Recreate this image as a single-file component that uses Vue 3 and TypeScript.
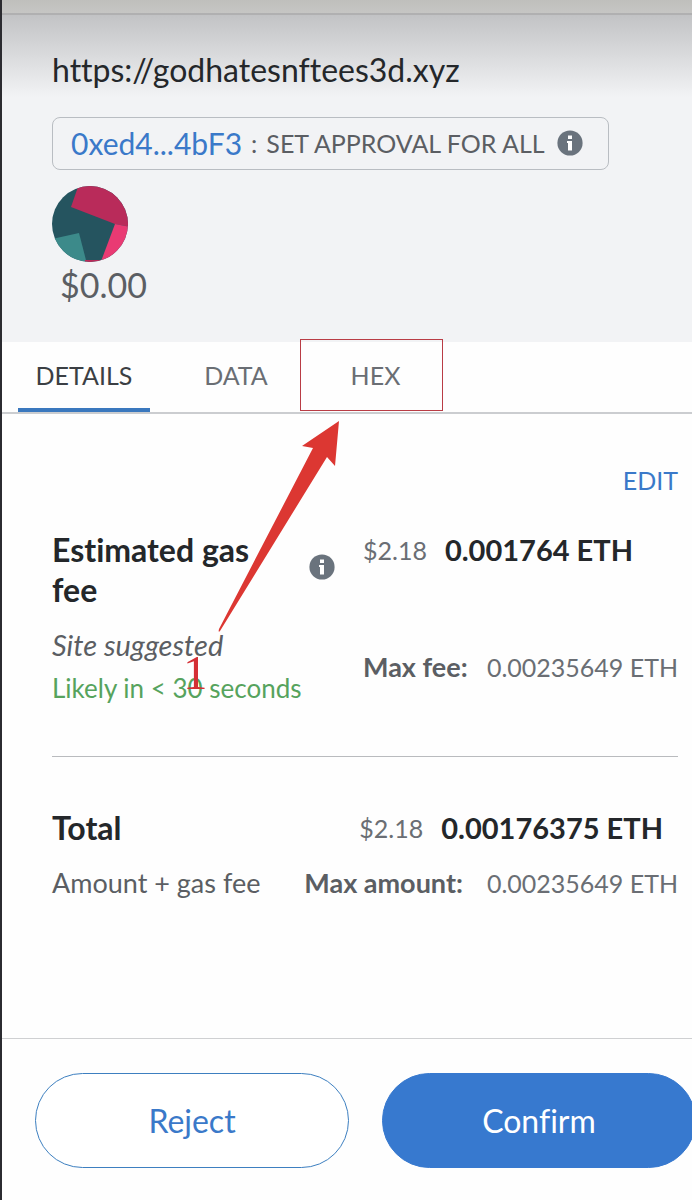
<script setup lang="ts">
import { ref } from 'vue'

const origin = 'https://godhatesnftees3d.xyz'
const tabs: string[] = ['DETAILS', 'DATA', 'HEX']
const active = ref('DETAILS')
</script>

<template>
  <main class="popup">
    <div class="strip"></div>
    <header class="summary">
      <p class="origin">{{ origin }}</p>
      <div class="method">
        <a class="address" href="#">0xed4...4bF3</a>
        <span class="colon">:</span>
        <span class="action">SET APPROVAL FOR ALL</span>
        <svg class="info" viewBox="0 0 26 26" role="img" aria-label="Info">
          <circle cx="13" cy="13" r="12.6" />
          <rect class="mark" x="11" y="5.5" width="4" height="3.5" />
          <path class="mark" d="M10 11H15V20.5H11V13H10Z" />
        </svg>
      </div>
      <svg class="avatar" viewBox="0 0 76 76" aria-hidden="true">
        <defs>
          <clipPath id="avatar-clip"><circle cx="38" cy="38" r="38" /></clipPath>
        </defs>
        <g clip-path="url(#avatar-clip)">
          <rect width="76" height="76" fill="#25545f" />
          <path d="M27 -2L19 21L63 38L78 41V-2Z" fill="#b92b5a" />
          <path d="M63 38L48 78H78V41Z" fill="#e93a73" />
          <path d="M0 53L27 47L35 78H0Z" fill="#3c8a8a" />
          <path d="M33 74H50V78H33Z" fill="#b92b5a" />
        </g>
      </svg>
      <p class="fiat">$0.00</p>
    </header>

    <nav class="tabs" role="tablist">
      <button
        v-for="tab in tabs"
        :key="tab"
        type="button"
        role="tab"
        class="tab"
        :class="{ active: tab === active, framed: tab === 'HEX' }"
        :aria-selected="tab === active"
        @click="active = tab"
      >{{ tab }}</button>
    </nav>

    <section class="details">
      <div class="edit-row"><button type="button" class="edit">EDIT</button></div>
      <div class="gas">
        <div class="gas-head">
          <h2 class="title">Estimated gas fee</h2>
          <svg class="info" viewBox="0 0 26 26" role="img" aria-label="Info">
            <circle cx="13" cy="13" r="12.6" />
            <rect class="mark" x="11" y="5.5" width="4" height="3.5" />
            <path class="mark" d="M10 11H15V20.5H11V13H10Z" />
          </svg>
        </div>
        <p class="amount"><span class="usd">$2.18</span><strong>0.001764 ETH</strong></p>
        <div class="timing">
          <p class="suggested">Site suggested</p>
          <p class="likely">Likely in &lt; 30 seconds</p>
        </div>
        <p class="max"><strong>Max fee:</strong><span>0.00235649 ETH</span></p>
      </div>
      <div class="total">
        <div class="line">
          <h2 class="title">Total</h2>
          <p class="amount inset"><span class="usd">$2.18</span><strong>0.00176375 ETH</strong></p>
        </div>
        <div class="line">
          <p class="note">Amount + gas fee</p>
          <p class="max"><strong>Max amount:</strong><span>0.00235649 ETH</span></p>
        </div>
      </div>
    </section>

    <footer class="actions">
      <button type="button" class="pill reject">Reject</button>
      <button type="button" class="pill confirm">Confirm</button>
    </footer>

    <svg class="arrow" viewBox="0 0 124 214" aria-hidden="true">
      <path d="M125 1L121 46L113 37L6 211Q4 213 5 209L99 28L88 26Z" />
    </svg>
    <span class="step">1</span>
  </main>
</template>

<style>
body {
  margin: 0;
}
</style>

<style scoped>
.popup {
  position: relative;
  box-sizing: border-box;
  min-height: 100vh;
  display: flex;
  flex-direction: column;
  overflow: hidden;
  border-left: 2px solid #2b2b30;
  background: #fefefe;
  color: #24272a;
  font-family: Lato, "Liberation Sans", sans-serif;
  font-size: 26px;
  line-height: 32px;
  font-variant-ligatures: none;
}
p,
h2 {
  margin: 0;
}
button {
  font: inherit;
  font-variant-ligatures: none;
  cursor: pointer;
}
.strip {
  height: 13px;
  border-bottom: 2px solid #b0b0b1;
  background: linear-gradient(#bfbfbc, #c6c6c4);
}
.summary {
  box-sizing: border-box;
  height: 327px;
  padding: 37px 50px 0;
  background: linear-gradient(#c2c3c5, #dcdddf 45px, #f2f3f5 82px);
}
.origin {
  font-size: 32px;
  line-height: 36px;
}
.method {
  box-sizing: border-box;
  width: fit-content;
  height: 53px;
  margin-top: 29px;
  padding: 0 25px 2px 18px;
  display: flex;
  align-items: center;
  border: 1px solid #b9bdc2;
  border-radius: 8px;
  white-space: nowrap;
  color: #5b5e63;
  font-size: 25px;
}
.address {
  color: #3a79c9;
  font-size: 30px;
  text-decoration: none;
}
.colon {
  margin: 0 9px;
}
.info {
  flex: none;
  width: 26px;
  height: 26px;
  fill: #6a737d;
}
.method .info {
  margin-left: 12px;
}
.info .mark {
  fill: #fff;
}
.avatar {
  display: block;
  width: 76px;
  height: 76px;
  margin-top: 16px;
}
.fiat {
  padding: 3px 8px 0;
  font-size: 34px;
  line-height: 40px;
  color: #5b5e63;
}
.tabs {
  display: flex;
  height: 70px;
  padding-left: 16px;
  border-bottom: 2px solid #cbcdd0;
}
.tab {
  box-sizing: border-box;
  padding: 0;
  border: 0;
  border-bottom: 4px solid transparent;
  background: none;
  color: #6a6e74;
  font-size: 25px;
}
.tab.active {
  width: 132px;
  border-bottom-color: #3a78be;
  color: #3b3f44;
}
.tab:nth-child(2) {
  width: 132px;
  margin: 0 -2px 0 20px;
}
.tab.framed {
  width: 143px;
  height: 72px;
  margin-top: -3px;
  padding: 0 0 0 8px;
  border: 1px solid #b93c45;
}
.details {
  flex: 1;
  padding: 50px 14px 0 50px;
}
.edit-row {
  display: flex;
  justify-content: flex-end;
}
.edit {
  padding: 0;
  border: 0;
  background: none;
  color: #3a79c9;
  font-size: 25px;
}
.gas {
  display: grid;
  grid-template-columns: 1fr 315px;
  row-gap: 19px;
  margin-top: 34px;
  padding-bottom: 52px;
  border-bottom: 1px solid #b9bbbe;
}
.gas-head {
  display: flex;
  align-items: center;
  justify-content: space-between;
  padding-right: 28px;
}
.gas-head .info {
  margin-bottom: 6px;
}
.title {
  font-size: 32px;
  line-height: 40px;
  font-weight: 700;
}
.gas-head .title {
  width: 216px;
}
.amount {
  display: flex;
  gap: 18px;
  font-size: 29px;
  line-height: 40px;
  white-space: nowrap;
}
.amount strong {
  font-weight: 700;
}
.usd {
  color: #6a6e74;
  font-size: 25px;
}
.inset {
  padding-right: 15px;
}
.timing {
  white-space: nowrap;
}
.suggested {
  font-size: 29px;
  font-style: italic;
  color: #5b5e63;
}
.likely {
  margin-top: 11px;
  color: #56a35d;
}
.max {
  display: flex;
  justify-content: space-between;
  gap: 24px;
  white-space: nowrap;
  color: #6a6e74;
  font-size: 25px;
}
.gas .max {
  align-self: center;
  gap: 18px;
}
.max strong {
  color: #5b5e63;
  font-size: 27px;
}
.total {
  display: grid;
  row-gap: 19px;
  padding-top: 51px;
}
.line {
  display: flex;
  justify-content: space-between;
}
.note {
  color: #5b5e63;
  font-size: 27px;
}
.actions {
  display: flex;
  gap: 33px;
  margin-right: -4px;
  padding: 34px 0 32px 33px;
  border-top: 1px solid #cfd0d2;
}
.pill {
  box-sizing: border-box;
  flex: 1;
  height: 95px;
  border: 1px solid #3779cf;
  border-radius: 48px;
  font-size: 32px;
}
.reject {
  border-color: #3d7fc0;
  background: #fff;
  color: #3a79c9;
}
.confirm {
  background: #3779cf;
  color: #fff;
}
.arrow {
  position: absolute;
  left: 212px;
  top: 420px;
  width: 124px;
  height: 214px;
  overflow: visible;
  fill: #dc3732;
}
.step {
  position: absolute;
  left: 181px;
  top: 648px;
  font-family: "Liberation Serif", serif;
  font-size: 49px;
  line-height: 49px;
  color: #d42f35;
}
</style>
